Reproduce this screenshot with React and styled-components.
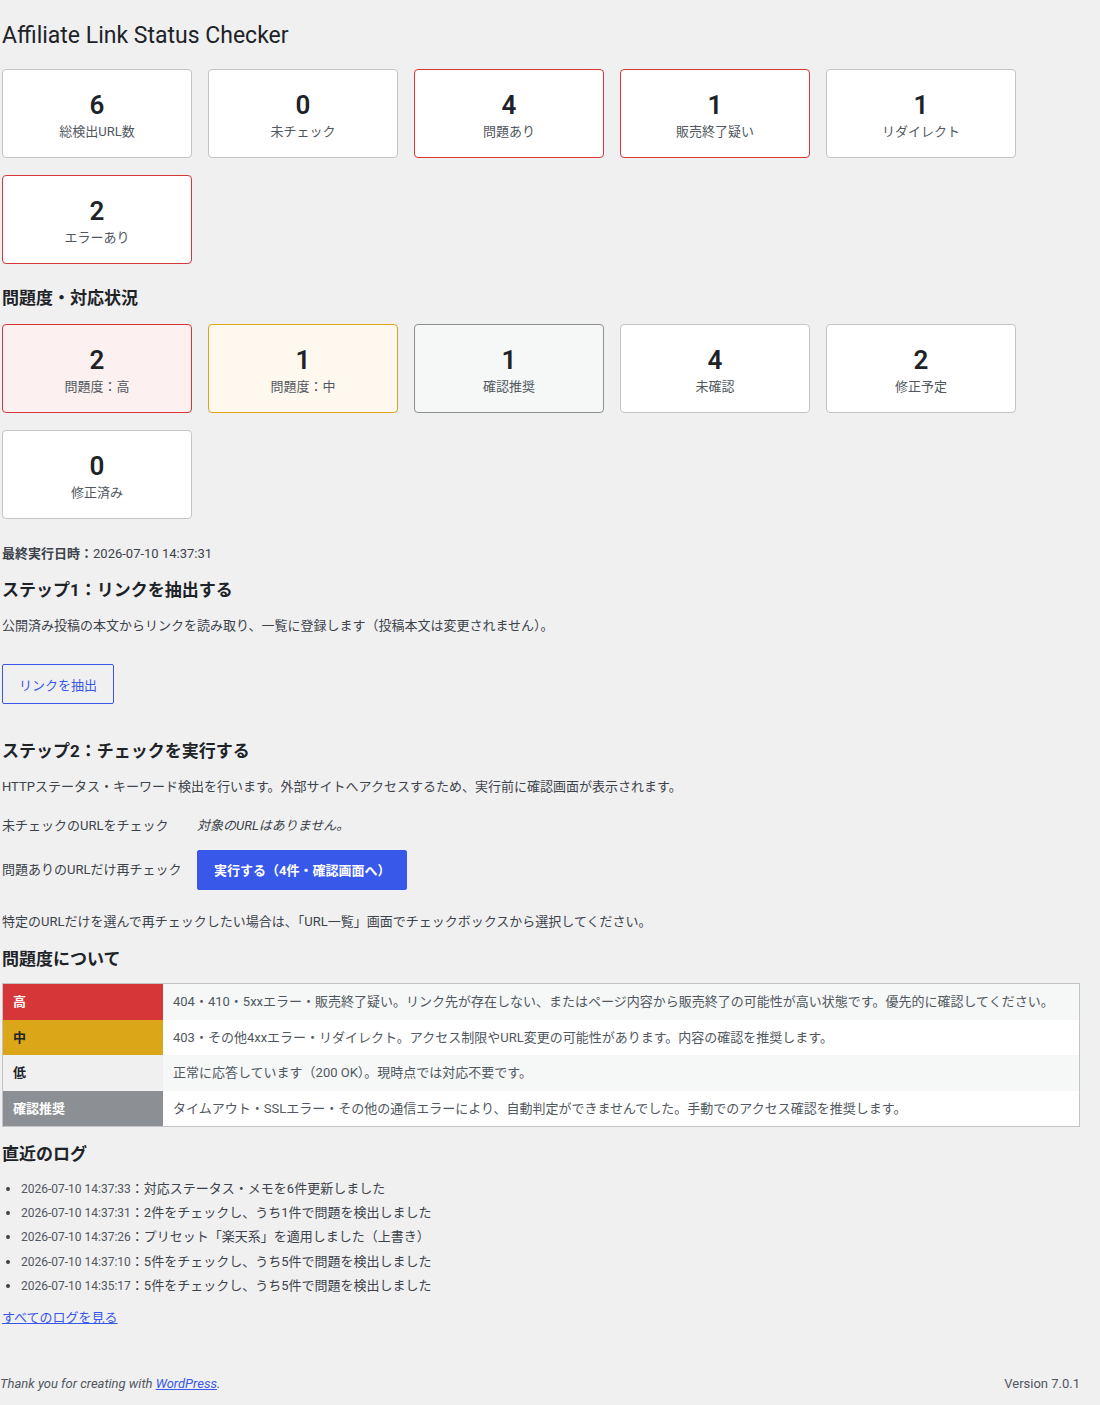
import React from "react";
import styled, { createGlobalStyle } from "styled-components";

const GlobalStyle = createGlobalStyle`
  html, body {
    margin: 0;
    padding: 0;
    background: #f0f0f1;
  }
  body {
    font-family: Roboto, "Noto Sans CJK JP", sans-serif;
    font-size: 13px;
    line-height: 1.5;
    color: #3c434a;
  }
`;

const Page = styled.div`
  min-height: 1405px;
  display: flex;
  flex-direction: column;
`;

const Wrap = styled.div`
  padding: 10px 20px 0 2px;
`;

const Title = styled.h1`
  margin: 0;
  padding: 11px 0 4px;
  font-size: 23px;
  font-weight: 400;
  line-height: 30px;
  color: #1d2327;
`;

const CardGrid = styled.div`
  display: flex;
  flex-wrap: wrap;
  gap: 17px 16px;
  margin-top: ${(p) => p.$top}px;
`;

const tones = {
  plain: { bg: "#fff", border: "#c3c4c7" },
  alert: { bg: "#fff", border: "#d63638" },
  high: { bg: "#fcf0f1", border: "#d63638" },
  mid: { bg: "#fef8ee", border: "#dba617" },
  check: { bg: "#f6f7f7", border: "#8c8f94" },
};

const Card = styled.div`
  box-sizing: border-box;
  width: 190px;
  height: 89px;
  padding-top: 20px;
  text-align: center;
  background: ${(p) => tones[p.$tone].bg};
  border: 1px solid ${(p) => tones[p.$tone].border};
  border-radius: 4px;
`;

const Num = styled.div`
  font-size: 26px;
  font-weight: 600;
  line-height: 31px;
  color: #1d2327;
`;

const Label = styled.div`
  margin-top: 1px;
  font-size: 13px;
  line-height: 19.5px;
  color: #50575e;
`;

const Heading = styled.h2`
  margin: ${(p) => p.$top}px 0 0;
  font-size: 17px;
  font-weight: 700;
  line-height: 22px;
  color: #1d2327;
`;

const Text = styled.p`
  margin: ${(p) => p.$top}px 0 0;
  font-size: 13px;
  line-height: 19.5px;
  color: #3c434a;
`;

const Strong = styled.strong`
  font-weight: 700;
`;

const Button = styled.button`
  box-sizing: border-box;
  height: 40px;
  padding: 0 16px;
  font-family: inherit;
  font-size: 13px;
  border-radius: 2px;
  cursor: pointer;
  border: 1px solid #3858e9;
  color: ${(p) => (p.$primary ? "#fff" : "#3858e9")};
  background: ${(p) => (p.$primary ? "#3858e9" : "transparent")};
  font-weight: ${(p) => (p.$primary ? 700 : 400)};
`;

const ButtonRow = styled.div`
  margin-top: 29px;
  display: flex;
`;

const FormRow = styled.div`
  display: flex;
  align-items: center;
  margin-top: ${(p) => p.$top}px;
  min-height: ${(p) => p.$h}px;
`;

const RowLabel = styled.div`
  width: 195px;
  color: #3c434a;
`;

const Note = styled.em`
  font-style: italic;
  color: #3c434a;
`;

const Table = styled.table`
  margin-top: 13px;
  width: 100%;
  border-collapse: collapse;
  border: 1px solid #c3c4c7;
  background: #fff;
`;

const levelStyles = {
  high: { bg: "#d63638", fg: "#fff" },
  mid: { bg: "#dba617", fg: "#1d2327" },
  low: { bg: "#f0f0f1", fg: "#1d2327" },
  check: { bg: "#8c8f94", fg: "#fff" },
};

const LevelCell = styled.th`
  width: 140px;
  padding: 8px 10px;
  text-align: left;
  font-weight: 700;
  line-height: 19.5px;
  background: ${(p) => levelStyles[p.$level].bg};
  color: ${(p) => levelStyles[p.$level].fg};
`;

const DescCell = styled.td`
  padding: 8px 10px;
  line-height: 19.5px;
  color: #50575e;
  background: ${(p) => (p.$odd ? "#f6f7f7" : "#fff")};
`;

const LogList = styled.ul`
  margin: 12px 0 0;
  padding-left: 19px;
  list-style: disc;
`;

const LogItem = styled.li`
  line-height: 24.2px;
  color: #3c434a;
`;

const LogTime = styled.span`
  font-size: 12px;
  color: #50575e;
`;

const Link = styled.a`
  color: #3858e9;
  text-decoration: underline;
`;

const MoreLink = styled(Link)`
  display: inline-block;
  margin-top: 10px;
  line-height: 19.5px;
`;

const Footer = styled.footer`
  margin-top: auto;
  display: flex;
  justify-content: space-between;
  padding: 0 20px 11px 0;
  line-height: 20px;
  color: #50575e;
`;

const Thanks = styled.span`
  font-style: italic;
`;

const summary = [
  { n: 6, label: "総検出URL数", tone: "plain" },
  { n: 0, label: "未チェック", tone: "plain" },
  { n: 4, label: "問題あり", tone: "alert" },
  { n: 1, label: "販売終了疑い", tone: "alert" },
  { n: 1, label: "リダイレクト", tone: "plain" },
  { n: 2, label: "エラーあり", tone: "alert" },
];

const status = [
  { n: 2, label: "問題度：高", tone: "high" },
  { n: 1, label: "問題度：中", tone: "mid" },
  { n: 1, label: "確認推奨", tone: "check" },
  { n: 4, label: "未確認", tone: "plain" },
  { n: 2, label: "修正予定", tone: "plain" },
  { n: 0, label: "修正済み", tone: "plain" },
];

const levels = [
  {
    level: "high",
    name: "高",
    desc: "404・410・5xxエラー・販売終了疑い。リンク先が存在しない、またはページ内容から販売終了の可能性が高い状態です。優先的に確認してください。",
  },
  {
    level: "mid",
    name: "中",
    desc: "403・その他4xxエラー・リダイレクト。アクセス制限やURL変更の可能性があります。内容の確認を推奨します。",
  },
  {
    level: "low",
    name: "低",
    desc: "正常に応答しています（200 OK）。現時点では対応不要です。",
  },
  {
    level: "check",
    name: "確認推奨",
    desc: "タイムアウト・SSLエラー・その他の通信エラーにより、自動判定ができませんでした。手動でのアクセス確認を推奨します。",
  },
];

const logs = [
  { time: "2026-07-10 14:37:33", msg: "対応ステータス・メモを6件更新しました" },
  { time: "2026-07-10 14:37:31", msg: "2件をチェックし、うち1件で問題を検出しました" },
  { time: "2026-07-10 14:37:26", msg: "プリセット「楽天系」を適用しました（上書き）" },
  { time: "2026-07-10 14:37:10", msg: "5件をチェックし、うち5件で問題を検出しました" },
  { time: "2026-07-10 14:35:17", msg: "5件をチェックし、うち5件で問題を検出しました" },
];

function Cards({ items, top }) {
  return (
    <CardGrid $top={top}>
      {items.map((c) => (
        <Card key={c.label} $tone={c.tone}>
          <Num>{c.n}</Num>
          <Label>{c.label}</Label>
        </Card>
      ))}
    </CardGrid>
  );
}

export default function App() {
  return (
    <Page>
      <GlobalStyle />
      <Wrap>
        <Title>Affiliate Link Status Checker</Title>
        <Cards items={summary} top={14} />

        <Heading $top={23}>問題度・対応状況</Heading>
        <Cards items={status} top={15} />

        <Text $top={25}>
          <Strong>最終実行日時：</Strong>2026-07-10 14:37:31
        </Text>

        <Heading $top={15}>ステップ1：リンクを抽出する</Heading>
        <Text $top={15}>
          公開済み投稿の本文からリンクを読み取り、一覧に登録します（投稿本文は変更されません）。
        </Text>
        <ButtonRow>
          <Button>リンクを抽出</Button>
        </ButtonRow>

        <Heading $top={36}>ステップ2：チェックを実行する</Heading>
        <Text $top={15}>
          HTTPステータス・キーワード検出を行います。外部サイトへアクセスするため、実行前に確認画面が表示されます。
        </Text>
        <FormRow $top={19} $h={20}>
          <RowLabel>未チェックのURLをチェック</RowLabel>
          <Note>対象のURLはありません。</Note>
        </FormRow>
        <FormRow $top={14} $h={40}>
          <RowLabel>問題ありのURLだけ再チェック</RowLabel>
          <Button $primary>実行する（4件・確認画面へ）</Button>
        </FormRow>
        <Text $top={22}>
          特定のURLだけを選んで再チェックしたい場合は、「URL一覧」画面でチェックボックスから選択してください。
        </Text>

        <Heading $top={17}>問題度について</Heading>
        <Table>
          <tbody>
            {levels.map((l, i) => (
              <tr key={l.level}>
                <LevelCell $level={l.level}>{l.name}</LevelCell>
                <DescCell $odd={i % 2 === 0}>{l.desc}</DescCell>
              </tr>
            ))}
          </tbody>
        </Table>

        <Heading $top={16}>直近のログ</Heading>
        <LogList>
          {logs.map((l) => (
            <LogItem key={l.time}>
              <LogTime>{l.time}</LogTime>：{l.msg}
            </LogItem>
          ))}
        </LogList>
        <MoreLink href="#">すべてのログを見る</MoreLink>
      </Wrap>

      <Footer>
        <Thanks>
          Thank you for creating with <Link href="#">WordPress</Link>.
        </Thanks>
        <span>Version 7.0.1</span>
      </Footer>
    </Page>
  );
}
